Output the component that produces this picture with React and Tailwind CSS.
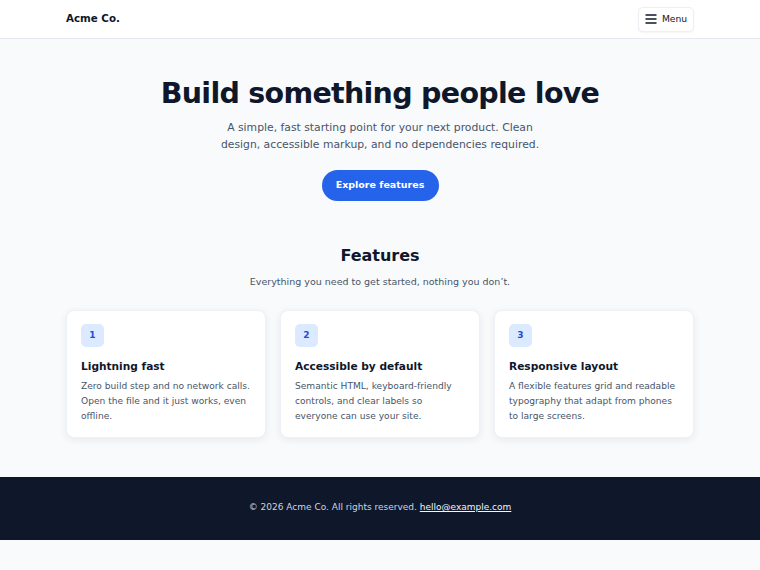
const features = [
  {
    n: 1,
    title: 'Lightning fast',
    body: 'Zero build step and no network calls. Open the file and it just works, even offline.',
  },
  {
    n: 2,
    title: 'Accessible by default',
    body: 'Semantic HTML, keyboard-friendly controls, and clear labels so everyone can use your site.',
  },
  {
    n: 3,
    title: 'Responsive layout',
    body: 'A flexible features grid and readable typography that adapt from phones to large screens.',
  },
];

const App = () => {
  return (
    <div className="min-h-screen bg-[#f8fafc] text-[#0f172a] font-['DejaVu_Sans',sans-serif]">
      {/* Header */}
      <header className="bg-white border-b border-[#e5e9ef]">
        <div className="max-w-[628px] mx-auto h-[38px] flex items-center justify-between">
          <span className="text-[10.3px] font-bold">Acme Co.</span>
          <button className="flex items-center gap-[5px] h-[25px] w-[56px] justify-center bg-white border border-[#eceff3] rounded-[5px] shadow-[0_1px_2px_rgba(15,23,42,0.05)] text-[9.2px] text-[#0f172a]">
            <svg width="12" height="12" viewBox="0 0 12 12" fill="none" stroke="currentColor" strokeWidth="1.3">
              <path d="M0.5 2h11M0.5 6h11M0.5 10h11" />
            </svg>
            Menu
          </button>
        </div>
      </header>

      {/* Hero */}
      <section className="pt-[38px] text-center">
        <h1 className="text-[28.5px] leading-[34px] font-bold tracking-tight">Build something people love</h1>
        <p className="mt-[8px] mx-auto max-w-[330px] text-[10.8px] leading-[17px] text-[#475569]">
          A simple, fast starting point for your next product. Clean design, accessible markup, and no dependencies required.
        </p>
        <button className="mt-[17px] h-[31px] w-[117px] rounded-full bg-[#2563eb] text-white text-[9.5px] font-bold">
          Explore features
        </button>
      </section>

      {/* Features */}
      <section className="pt-[45px] pb-[39px]">
        <div className="max-w-[628px] mx-auto">
          <h2 className="text-center text-[16px] leading-[20px] font-bold">Features</h2>
          <p className="mt-[9px] text-center text-[9.5px] leading-[14px] text-[#475569]">
            Everything you need to get started, nothing you don’t.
          </p>
          <div className="mt-[21px] grid grid-cols-3 gap-[14px]">
            {features.map((f) => (
              <div key={f.n} className="bg-white rounded-[8px] border border-[#eef1f5] shadow-[0_2px_8px_rgba(15,23,42,0.07)] pl-[14px] pr-[13px] pt-[13px] pb-[13px]">
                <div className="w-[23px] h-[23px] rounded-[5px] bg-[#dbeafe] text-[#1d4ed8] text-[9px] font-bold flex items-center justify-center">
                  {f.n}
                </div>
                <h3 className="mt-[12px] text-[10.6px] leading-[14px] font-bold">{f.title}</h3>
                <p className="mt-[5.5px] text-[9.1px] leading-[15px] text-[#475569]">{f.body}</p>
              </div>
            ))}
          </div>
        </div>
      </section>

      {/* Footer */}
      <footer className="bg-[#0f172a] h-[63px] flex items-center justify-center text-[9px] text-[#cbd5e1]">
        <span>
          © 2026 Acme Co. All rights reserved.{' '}
          <a href="#" className="text-[#f1f5f9] underline">hello@example.com</a>
        </span>
      </footer>
    </div>
  );
};

export default App;
